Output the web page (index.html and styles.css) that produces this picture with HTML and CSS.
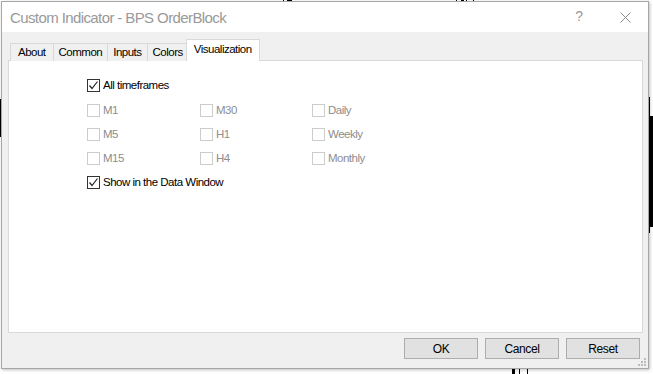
FILE: index.html
```html
<!DOCTYPE html>
<html lang="en">
<head>
    <meta charset="UTF-8">
    <meta name="viewport" content="width=device-width, initial-scale=1.0">
    <title>Custom Indicator - BPS OrderBlock</title>
    <link rel="stylesheet" href="styles.css">
</head>
<body>
    <!-- chart bars showing behind the dialog -->
    <div class="chart">
        <span class="bar" style="left:0;top:99px;width:2px;height:38px"></span>
        <span class="bar" style="left:649px;top:97px;width:1px;height:136px"></span>
        <span class="bar" style="left:649px;top:116px;width:4px;height:111px"></span>
        <span class="bar" style="left:283px;top:0;width:1px;height:2px"></span>
        <span class="bar" style="left:287px;top:0;width:5px;height:2px"></span>
        <span class="bar" style="left:456px;top:0;width:1px;height:2px"></span>
        <span class="bar" style="left:461px;top:0;width:3px;height:2px"></span>
        <span class="bar" style="left:466px;top:0;width:1px;height:2px"></span>
        <span class="bar" style="left:473px;top:0;width:1px;height:2px"></span>
        <span class="bar" style="left:512px;top:369px;width:3px;height:5px"></span>
        <span class="bar" style="left:519px;top:369px;width:1px;height:5px"></span>
        <span class="bar" style="left:527px;top:369px;width:1px;height:5px"></span>
    </div>

    <div class="dialog">
        <div class="titlebar">
            <span class="title">Custom Indicator - BPS OrderBlock</span>
            <span class="ctl help">?</span>
            <span class="ctl close">
                <svg width="11" height="11" viewBox="0 0 11 11"><path d="M0.5 0.5 L10.5 10.5 M10.5 0.5 L0.5 10.5" stroke="#8c8c8c" stroke-width="1" fill="none"/></svg>
            </span>
        </div>

        <div class="body">
            <div class="tabs">
                <div class="tab">About</div>
                <div class="tab">Common</div>
                <div class="tab">Inputs</div>
                <div class="tab">Colors</div>
                <div class="tab active">Visualization</div>
            </div>

            <div class="panel">
                <label class="check on">
                    <span class="box checked"><svg width="11" height="11" viewBox="0 0 11 11"><path d="M1.5 5.5 L4 8.5 L9.5 1.5" stroke="#222" stroke-width="1.2" fill="none"/></svg></span>
                    All timeframes
                </label>

                <div class="frames">
                    <label class="check"><span class="box"></span>M1</label>
                    <label class="check"><span class="box"></span>M30</label>
                    <label class="check"><span class="box"></span>Daily</label>
                    <label class="check"><span class="box"></span>M5</label>
                    <label class="check"><span class="box"></span>H1</label>
                    <label class="check"><span class="box"></span>Weekly</label>
                    <label class="check"><span class="box"></span>M15</label>
                    <label class="check"><span class="box"></span>H4</label>
                    <label class="check"><span class="box"></span>Monthly</label>
                </div>

                <label class="check on">
                    <span class="box checked"><svg width="11" height="11" viewBox="0 0 11 11"><path d="M1.5 5.5 L4 8.5 L9.5 1.5" stroke="#222" stroke-width="1.2" fill="none"/></svg></span>
                    Show in the Data Window
                </label>
            </div>

            <div class="buttons">
                <button>OK</button>
                <button>Cancel</button>
                <button>Reset</button>
            </div>
        </div>

        <svg class="grip" width="8" height="8" viewBox="0 0 8 8">
            <rect x="6" y="0" width="2" height="2" fill="#bdbdbd"/>
            <rect x="3" y="3" width="2" height="2" fill="#bdbdbd"/>
            <rect x="6" y="3" width="2" height="2" fill="#bdbdbd"/>
            <rect x="0" y="6" width="2" height="2" fill="#bdbdbd"/>
            <rect x="3" y="6" width="2" height="2" fill="#bdbdbd"/>
            <rect x="6" y="6" width="2" height="2" fill="#bdbdbd"/>
        </svg>
    </div>
</body>
</html>
```

FILE: styles.css
```css
body {
    margin: 0;
    background: white;
    font-family: "Liberation Sans", Arial, sans-serif;
    font-size: 11.5px;
    letter-spacing: -0.5px;
    color: #000;
    position: relative;
    width: 653px;
    height: 374px;
    overflow: hidden;
}

.chart .bar {
    position: absolute;
    background: #000;
}

.dialog {
    position: relative;
    margin: 1px 0 0 1px;
    width: 646px;
    height: 366px;
    border: 1px solid #a6a6a6;
    background: #f0f0f0;
    display: flex;
    flex-direction: column;
    box-shadow: 1px 1px 3px rgba(0,0,0,0.25);
}

.titlebar {
    height: 30px;
    background: white;
    display: flex;
    align-items: center;
}

.title {
    flex: 1;
    padding-left: 8px;
    font-size: 15px;
    letter-spacing: -0.6px;
    color: #999;
}

.ctl {
    width: 46px;
    height: 30px;
    display: flex;
    align-items: center;
    justify-content: center;
    color: #999;
}

.help {
    font-size: 14px;
    padding-bottom: 2px;
    box-sizing: border-box;
}

.body {
    flex: 1;
    display: flex;
    flex-direction: column;
    padding: 7px 5px 0 6px;
}

.tabs {
    display: flex;
    align-items: flex-end;
    height: 22px;
    padding-left: 2px;
    margin-bottom: -1px;
    position: relative;
    z-index: 1;
}

.tab {
    height: 17px;
    line-height: 17px;
    padding: 0 5px;
    border: 1px solid #d9d9d9;
    border-bottom: none;
    margin-right: -1px;
    background: #f0f0f0;
}

.tab:first-child {
    padding: 0 7px;
}

.tab.active {
    height: 21px;
    line-height: 19px;
    padding: 0 7px;
    margin-left: -2px;
    background: white;
}

.panel {
    flex: 1;
    background: white;
    border: 1px solid #d9d9d9;
    padding: 12px 0 0 78px;
}

.check {
    display: flex;
    align-items: center;
    height: 24px;
    color: #8d8d8d;
}

.check.on {
    color: #000;
}

.box {
    width: 11px;
    height: 11px;
    border: 1px solid #cccccc;
    background: white;
    margin-right: 3px;
    display: flex;
    align-items: center;
    justify-content: center;
}

.box.checked {
    border-color: #333;
}

.frames {
    display: grid;
    grid-template-columns: 113px 112px 1fr;
    margin-top: 1px;
}

.buttons {
    display: flex;
    justify-content: flex-end;
    gap: 7px;
    padding: 5px 3px 9px 0;
}

button {
    width: 74px;
    height: 21px;
    background: #e1e1e1;
    border: 1px solid #adadad;
    font-family: "Liberation Sans", Arial, sans-serif;
    font-size: 12px;
    letter-spacing: -0.4px;
    color: #000;
    padding: 0;
}

.grip {
    position: absolute;
    right: 2px;
    bottom: 2px;
}
```
